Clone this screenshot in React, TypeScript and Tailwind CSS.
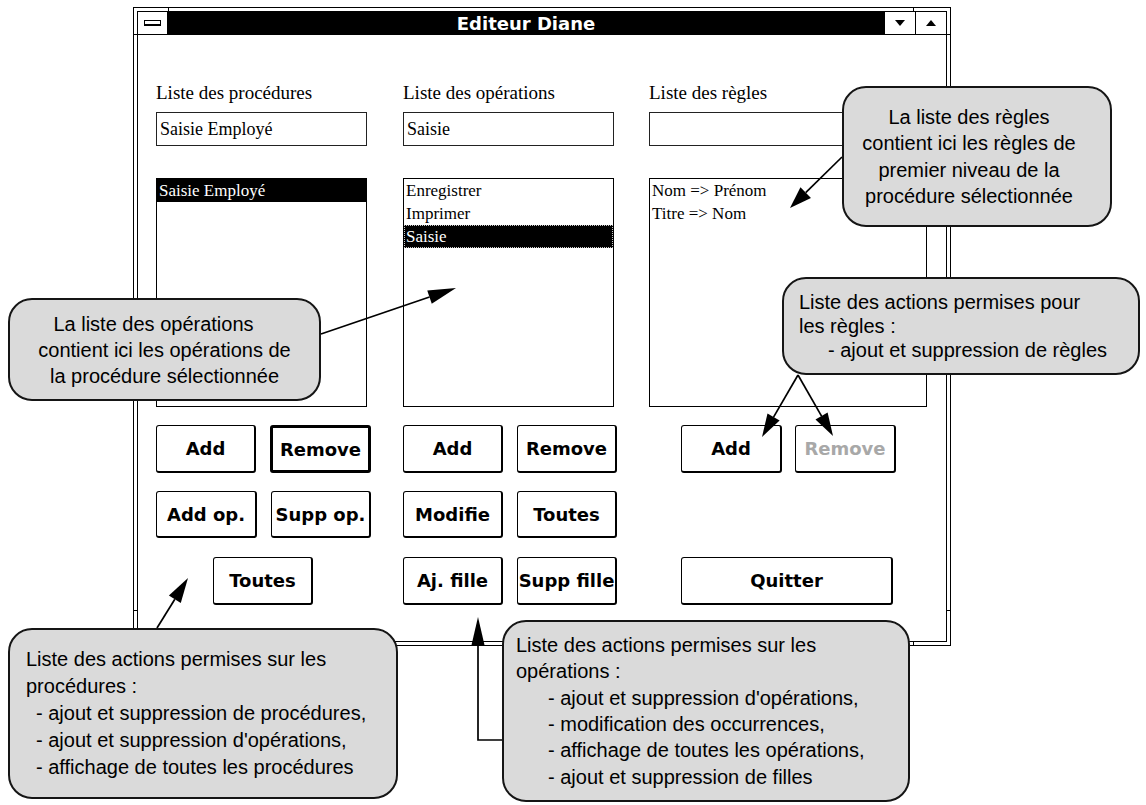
import React from 'react';

type ArrowProps = { x1: number; y1: number; x2: number; y2: number; len?: number; half?: number };

// straight leader line with a filled head at (x2, y2)
function Arrow({ x1, y1, x2, y2, len = 22, half = 7 }: ArrowProps) {
  const dx = x2 - x1;
  const dy = y2 - y1;
  const d = Math.hypot(dx, dy);
  const ux = dx / d;
  const uy = dy / d;
  const bx = x2 - ux * len;
  const by = y2 - uy * len;
  const px = -uy * half;
  const py = ux * half;
  return (
    <g>
      <line x1={x1} y1={y1} x2={bx} y2={by} stroke="#000" strokeWidth={1.7} />
      <polygon points={`${x2},${y2} ${bx + px},${by + py} ${bx - px},${by - py}`} fill="#000" />
    </g>
  );
}

type WinButtonProps = {
  label: string;
  className?: string;
  isDefault?: boolean;
  disabled?: boolean;
};

function WinButton({ label, className = '', isDefault = false, disabled = false }: WinButtonProps) {
  return (
    <button
      className={`flex h-full items-center justify-center whitespace-nowrap rounded-[3px] border-black bg-white font-['DejaVu_Sans',sans-serif] text-[18px] font-bold ${
        isDefault ? 'border-[3px]' : 'border border-b-2 border-r-2'
      } ${disabled ? 'text-[#a8a8a8]' : 'text-black'} ${className}`}
    >
      {label}
    </button>
  );
}

function TextBox({ value, className = '' }: { value: string; className?: string }) {
  return (
    <div
      className={`h-[34px] border border-[#222] pl-[3px] font-['Liberation_Serif',serif] text-[18px] leading-[32px] text-black ${className}`}
    >
      {value}
    </div>
  );
}

type ListItem = { text: string; selected?: boolean; focus?: boolean };

function ListBox({ items, className = '' }: { items: ListItem[]; className?: string }) {
  return (
    <div className={`h-[229px] border border-black bg-white ${className}`}>
      {items.map((item) => (
        <div
          key={item.text}
          className={`h-[23px] whitespace-nowrap pl-[2px] font-['Liberation_Serif',serif] text-[17px] leading-[23px] ${
            item.selected ? 'bg-black text-white' : 'text-black'
          } ${item.focus ? 'outline-1 -outline-offset-1 outline-dotted outline-[#c8c8c8]' : ''}`}
        >
          {item.text}
        </div>
      ))}
    </div>
  );
}

function TitleBar() {
  return (
    <div className="flex h-[23px] border-b border-black">
      <div className="flex w-[30px] items-center justify-center border-r border-black bg-white">
        <div className="h-[6px] w-[17px] border border-black border-b-2 bg-white" />
      </div>
      <div className="flex flex-1 items-center justify-center bg-black font-['DejaVu_Sans',sans-serif] text-[18px] font-bold text-white">
        Editeur Diane
      </div>
      <div className="flex w-[31px] items-center justify-center border-l border-black bg-white">
        <svg width="10" height="6" viewBox="0 0 10 6">
          <polygon points="0,0 10,0 5,6" fill="#000" />
        </svg>
      </div>
      <div className="flex w-[31px] items-center justify-center border-l border-black bg-white">
        <svg width="10" height="6" viewBox="0 0 10 6">
          <polygon points="0,6 10,6 5,0" fill="#000" />
        </svg>
      </div>
    </div>
  );
}

function Callout({ className = '', children }: { className?: string; children: React.ReactNode }) {
  return (
    <div
      className={`absolute flex flex-col justify-center whitespace-nowrap rounded-[24px] border-2 border-[#151515] bg-[#dadada] font-['Liberation_Sans',Arial,sans-serif] text-[20px] text-black ${className}`}
    >
      {children}
    </div>
  );
}

export default function App() {
  return (
    <div className="relative h-[805px] w-[1146px] overflow-hidden bg-white">
      <div className="pl-[133px] pt-[7px]">
        {/* window frame */}
        <div className="relative h-[639px] w-[818px] border border-black bg-white p-[3px]">
          <div className="absolute left-0 top-[26px] h-px w-[3px] bg-black" />
          <div className="absolute left-0 top-[602px] h-px w-[3px] bg-black" />
          <div className="absolute right-0 top-[26px] h-px w-[3px] bg-black" />
          <div className="absolute right-0 top-[602px] h-px w-[3px] bg-black" />
          <div className="absolute left-[34px] top-0 h-[3px] w-px bg-black" />
          <div className="absolute left-[779px] top-0 h-[3px] w-px bg-black" />
          <div className="absolute bottom-0 left-[34px] h-[3px] w-px bg-black" />
          <div className="absolute bottom-0 left-[779px] h-[3px] w-px bg-black" />

          <div className="flex h-full flex-col border border-black">
            <TitleBar />

            <div className="flex-1 pl-[18px]">
              <div className="mt-[47px] grid grid-cols-[247px_246px_278px] font-['Liberation_Serif',serif] text-[19px] leading-[22px] text-black">
                <div>Liste des procédures</div>
                <div>Liste des opérations</div>
                <div>Liste des règles</div>
              </div>

              <div className="mt-[8px] grid grid-cols-[247px_246px_278px]">
                <TextBox value="Saisie Employé" className="w-[211px]" />
                <TextBox value="Saisie" className="w-[211px]" />
                <TextBox value="" className="w-[278px]" />
              </div>

              <div className="mt-[32px] grid grid-cols-[247px_246px_278px]">
                <ListBox className="w-[211px]" items={[{ text: 'Saisie Employé', selected: true }]} />
                <ListBox
                  className="w-[211px]"
                  items={[
                    { text: 'Enregistrer' },
                    { text: 'Imprimer' },
                    { text: 'Saisie', selected: true, focus: true },
                  ]}
                />
                <ListBox className="w-[278px]" items={[{ text: 'Nom => Prénom' }, { text: 'Titre => Nom' }]} />
              </div>

              <div className="mt-[18px] grid h-[48px] grid-cols-[247px_246px_278px]">
                <div className="flex gap-[14px]">
                  <WinButton label="Add" className="w-[100px]" />
                  <WinButton label="Remove" isDefault className="w-[101px]" />
                </div>
                <div className="flex gap-[14px]">
                  <WinButton label="Add" className="w-[100px]" />
                  <WinButton label="Remove" className="w-[100px]" />
                </div>
                <div className="flex gap-[13px] pl-[32px]">
                  <WinButton label="Add" className="w-[101px]" />
                  <WinButton label="Remove" disabled className="w-[101px]" />
                </div>
              </div>

              <div className="mt-[18px] grid h-[47px] grid-cols-[247px_246px_278px]">
                <div className="flex gap-[14px]">
                  <WinButton label="Add op." className="w-[101px]" />
                  <WinButton label="Supp op." className="w-[100px]" />
                </div>
                <div className="flex gap-[14px]">
                  <WinButton label="Modifie" className="w-[100px]" />
                  <WinButton label="Toutes" className="w-[100px]" />
                </div>
                <div />
              </div>

              <div className="mt-[19px] grid h-[48px] grid-cols-[247px_246px_278px]">
                <div className="flex pl-[57px]">
                  <WinButton label="Toutes" className="w-[100px]" />
                </div>
                <div className="flex gap-[14px]">
                  <WinButton label="Aj. fille" className="w-[100px]" />
                  <WinButton label="Supp fille" className="w-[100px]" />
                </div>
                <div className="flex pl-[32px]">
                  <WinButton label="Quitter" className="w-[212px]" />
                </div>
              </div>
            </div>
          </div>
        </div>
      </div>

      {/* leader lines */}
      <svg className="pointer-events-none absolute inset-0" width="1146" height="805">
        <Arrow x1={842} y1={157} x2={790} y2={208} len={22} half={7.5} />
        <Arrow x1={321} y1={334} x2={456} y2={288} len={28} half={7} />
        <Arrow x1={798} y1={375} x2={762} y2={437} len={23} half={7} />
        <Arrow x1={798} y1={375} x2={833} y2={436} len={23} half={7} />
        <Arrow x1={157} y1={628} x2={188} y2={578} len={25} half={7} />
        <polyline points="503,740 478,740 478,640" fill="none" stroke="#000" strokeWidth={1.7} />
        <polygon points="478,617 471.5,645 484.5,645" fill="#000" />
      </svg>

      <Callout className="left-[842px] top-[86px] h-[141px] w-[270px] items-center pr-[16px] text-center leading-[26.5px]">
        <div>La liste des règles</div>
        <div>contient ici les règles de</div>
        <div>premier niveau de la</div>
        <div>procédure sélectionnée</div>
      </Callout>

      <Callout className="left-[8px] top-[298px] h-[103px] w-[313px] items-center text-center leading-[26px]">
        <div className="pr-[22px]">La liste des opérations</div>
        <div>contient ici les opérations de</div>
        <div>la procédure sélectionnée</div>
      </Callout>

      <Callout className="left-[782px] top-[277px] h-[98px] w-[358px] pl-[15px] leading-[24px]">
        <div>Liste des actions permises pour</div>
        <div>les règles :</div>
        <div className="pl-[29px]">- ajout et suppression de règles</div>
      </Callout>

      <Callout className="left-[8px] top-[628px] h-[171px] w-[390px] pl-[16px] leading-[27px]">
        <div>Liste des actions permises sur les</div>
        <div>procédures :</div>
        <div className="pl-[10px]">- ajout et suppression de procédures,</div>
        <div className="pl-[10px]">- ajout et suppression d'opérations,</div>
        <div className="pl-[10px]">- affichage de toutes les procédures</div>
      </Callout>

      <Callout className="left-[502px] top-[620px] h-[182px] w-[408px] pl-[12px] leading-[26.3px]">
        <div>Liste des actions permises sur les</div>
        <div>opérations :</div>
        <div className="pl-[32px]">- ajout et suppression d'opérations,</div>
        <div className="pl-[32px]">- modification des occurrences,</div>
        <div className="pl-[32px]">- affichage de toutes les opérations,</div>
        <div className="pl-[32px]">- ajout et suppression de filles</div>
      </Callout>
    </div>
  );
}
